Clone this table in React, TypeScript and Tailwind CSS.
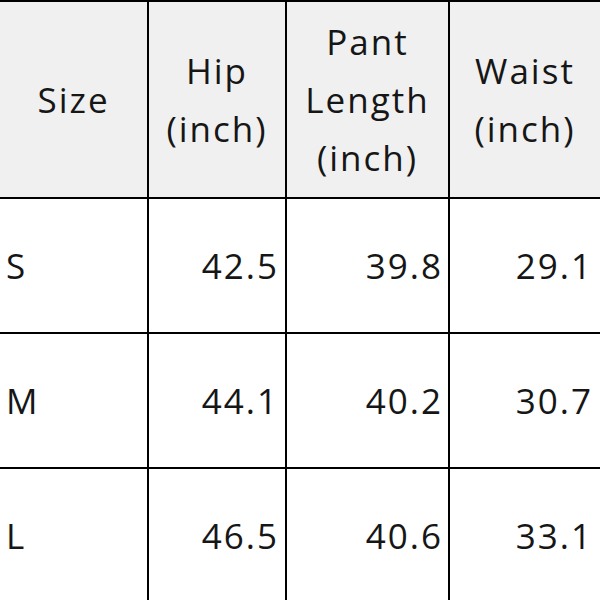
const rows = [
  { size: 'S', hip: '42.5', length: '39.8', waist: '29.1' },
  { size: 'M', hip: '44.1', length: '40.2', waist: '30.7' },
  { size: 'L', hip: '46.5', length: '40.6', waist: '33.1' },
];

export default function App() {
  return (
    <div className="w-[600px] h-[600px] overflow-hidden bg-white font-['Open_Sans',sans-serif] text-[#161616]">
      <table className="w-[600px] table-fixed border-collapse text-[35px] leading-[58px] tracking-[2px]">
        <thead>
          <tr className="h-[197px] bg-[#f0f0f0]">
            <th className="w-[148px] border-t-2 border-r-2 border-b-2 border-black font-normal text-center">
              Size
            </th>
            <th className="w-[138px] border-2 border-black font-normal text-center">
              Hip
              <br />
              (inch)
            </th>
            <th className="w-[163px] border-2 border-black font-normal text-center">
              Pant
              <br />
              Length
              <br />
              (inch)
            </th>
            <th className="w-[151px] border-t-2 border-l-2 border-b-2 border-black font-normal text-center">
              Waist
              <br />
              (inch)
            </th>
          </tr>
        </thead>
        <tbody>
          {rows.map((r) => (
            <tr key={r.size} className="h-[135px]">
              <td className="border-r-2 border-b-2 border-black pl-[6px] text-left">{r.size}</td>
              <td className="border-2 border-black pr-[6px] text-right">{r.hip}</td>
              <td className="border-2 border-black pr-[5px] text-right">{r.length}</td>
              <td className="border-l-2 border-b-2 border-black pr-[7px] text-right">{r.waist}</td>
            </tr>
          ))}
        </tbody>
      </table>
    </div>
  );
}
